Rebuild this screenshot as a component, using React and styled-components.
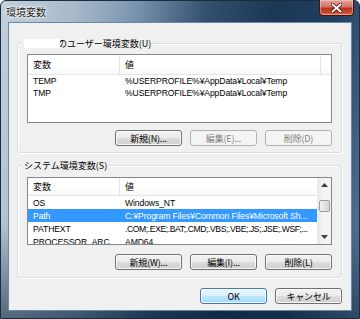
import React from "react";
import styled, { createGlobalStyle } from "styled-components";

const Global = createGlobalStyle`
  html, body { margin: 0; padding: 0; background: #ffffff; }
  body { width: 360px; height: 319px; overflow: hidden; }
`;

const UI_FONT = `"Liberation Sans", "Noto Sans CJK JP", sans-serif`;

const Window = styled.div`
  width: 360px;
  height: 319px;
  box-sizing: border-box;
  display: flex;
  flex-direction: column;
  border: 1px solid #1a2c40;
  border-radius: 6px 6px 0 0;
  background:
    linear-gradient(180deg, rgba(255,255,255,0.0) 0%, rgba(255,255,255,0) 70%, rgba(10,30,55,0.55) 100%),
    linear-gradient(100deg, #c3d0dc 0%, #a7b9ca 18%, #7d97b1 32%, #33506f 50%, #1b3756 66%, #213f60 82%, #5d7e9e 100%);
  font-family: ${UI_FONT};
  font-size: 9px;
  color: #000;
`;

const TitleBar = styled.div`
  height: 21px;
  display: flex;
  align-items: flex-start;
  justify-content: space-between;
  padding-left: 5px;
  padding-right: 5px;
`;

const Title = styled.div`
  font-family: "Noto Sans CJK JP", sans-serif;
  font-size: 10px;
  line-height: 10px;
  margin-top: 6px;
  color: #1e1e1e;
  text-shadow: 0 0 4px #fff, 0 0 3px #fff, 0 0 2px #fff;
`;

const CloseButton = styled.div`
  width: 35px;
  height: 16px;
  margin-top: -1px;
  box-sizing: border-box;
  border: 1px solid #3f1410;
  border-top: none;
  border-radius: 0 0 4px 4px;
  background: linear-gradient(180deg, #e4a49a 0%, #d0766a 45%, #b3301f 55%, #c94a31 85%, #e2704a 100%);
  box-shadow: inset 0 0 0 1px rgba(255,220,210,0.45);
  display: flex;
  align-items: center;
  justify-content: center;
`;

const Client = styled.div`
  flex: 1;
  margin: 0 7px 7px 7px;
  border: 1px solid #6a88a8;
  background: #f0f0f0;
  display: flex;
  flex-direction: column;
  padding: 20px 8px 0 8px;
`;

const Group = styled.div`
  position: relative;
  border: 1px solid #d5dfe5;
  box-shadow: inset 1px 1px 0 #ffffff, 1px 1px 0 #ffffff;
  border-radius: 3px;
  height: ${(p) => p.$h}px;
  box-sizing: border-box;
  padding: ${(p) => p.$pt}px 9px 0 9px;
  display: flex;
  flex-direction: column;
  margin-top: ${(p) => p.$mt || 0}px;
  margin-right: 1px;
`;

const Legend = styled.div`
  position: absolute;
  top: -6px;
  left: 4px;
  padding: 0 2px;
  background: #f0f0f0;
  font-family: "Noto Sans CJK JP", sans-serif;
  font-size: 9px;
  line-height: 11px;
  color: #000;
  display: flex;
  align-items: center;
`;

const Redact = styled.span`
  display: inline-block;
  width: 36px;
  height: 9px;
  background: #ffffff;
  margin-right: -2px;
  position: relative;
  z-index: 1;
`;

const List = styled.div`
  height: ${(p) => p.$h}px;
  box-sizing: border-box;
  border: 1px solid #828790;
  background: #fff;
  display: flex;
  overflow: hidden;
  flex: none;
`;

const ListMain = styled.div`
  flex: 1;
  display: flex;
  flex-direction: column;
  min-width: 0;
`;

const Header = styled.div`
  height: ${(p) => p.$hh}px;
  flex: none;
  display: flex;
  box-sizing: border-box;
  border-bottom: 1px solid #e5e5e5;
  background: linear-gradient(180deg, #ffffff 0%, #ffffff 60%, #f7f8fa 100%);
`;

const HeadCell = styled.div`
  width: ${(p) => (p.$w ? `${p.$w}px` : "auto")};
  flex: ${(p) => (p.$w ? "none" : "1")};
  box-sizing: border-box;
  padding-left: 5px;
  display: flex;
  align-items: center;
  border-right: ${(p) => (p.$last ? "none" : "1px solid #e5e5e5")};
  font-family: "Noto Sans CJK JP", sans-serif;
  font-size: 9px;
  color: #000;
`;

const Rows = styled.div`
  display: flex;
  flex-direction: column;
`;

const Row = styled.div`
  height: ${(p) => p.$rh}px;
  flex: none;
  display: flex;
  align-items: center;
  background: ${(p) => (p.$sel ? "#3399ff" : "transparent")};
  color: ${(p) => (p.$sel ? "#ffffff" : "#000000")};
  white-space: nowrap;
`;

const Cell = styled.div`
  width: ${(p) => (p.$w ? `${p.$w}px` : "auto")};
  flex: ${(p) => (p.$w ? "none" : "1")};
  box-sizing: border-box;
  padding-left: 5px;
  overflow: hidden;
  white-space: nowrap;
  font-size: 8.6px;
  letter-spacing: ${(p) => (p.$tight ? "-0.4px" : "-0.1px")};
`;

const ScrollBar = styled.div`
  width: 13px;
  flex: none;
  background: linear-gradient(90deg, #e8e8e8 0%, #f4f4f4 40%, #f4f4f4 100%);
  border-left: 1px solid #ececec;
  display: flex;
  flex-direction: column;
  align-items: center;
`;

const Arrow = styled.div`
  height: 14px;
  width: 13px;
  display: flex;
  align-items: center;
  justify-content: center;
`;

const Thumb = styled.div`
  width: 11px;
  height: 12px;
  margin-top: 8px;
  box-sizing: border-box;
  border: 1px solid #9c9c9c;
  border-radius: 2px;
  background: linear-gradient(90deg, #f2f2f2 0%, #e2e2e2 50%, #d6d6d6 100%);
`;

const Track = styled.div`
  flex: 1;
`;

const ButtonRow = styled.div`
  display: flex;
  justify-content: flex-end;
  gap: 8px;
  margin-top: ${(p) => p.$mt}px;
`;

const Button = styled.div`
  width: 67px;
  height: 16px;
  box-sizing: border-box;
  border-radius: 3px;
  display: flex;
  align-items: center;
  justify-content: center;
  font-family: "Noto Sans CJK JP", sans-serif;
  font-size: 9px;
  letter-spacing: -0.2px;
  border: 1px solid ${(p) => (p.$disabled ? "#adb2b5" : p.$default ? "#3c7fb1" : "#707070")};
  color: ${(p) => (p.$disabled ? "#838383" : "#000")};
  background: ${(p) =>
    p.$disabled
      ? "#f4f4f4"
      : p.$default
      ? "linear-gradient(180deg, #eaf6fd 0%, #d9f0fc 50%, #bee6fd 51%, #a7d9f5 100%)"
      : "linear-gradient(180deg, #f2f2f2 0%, #ebebeb 50%, #dddddd 51%, #cfcfcf 100%)"};
  box-shadow: inset 0 0 0 1px ${(p) => (p.$disabled ? "#f4f4f4" : "rgba(255,255,255,0.8)")};
`;

const Footer = styled.div`
  display: flex;
  justify-content: flex-end;
  gap: 8px;
  margin-top: 10px;
  margin-right: 1px;
`;

function CloseX() {
  return (
    <svg width="11" height="10" viewBox="0 0 11 10">
      <path d="M1.5 1.5 L9.5 8.5 M9.5 1.5 L1.5 8.5" stroke="#3a120c" strokeWidth="3.2" strokeLinecap="square" />
      <path d="M1.5 1.5 L9.5 8.5 M9.5 1.5 L1.5 8.5" stroke="#ffffff" strokeWidth="1.8" strokeLinecap="square" />
    </svg>
  );
}

function UpArrow() {
  return (
    <svg width="7" height="4" viewBox="0 0 7 4">
      <path d="M3.5 0 L7 4 L0 4 Z" fill="#404040" />
    </svg>
  );
}

function DownArrow() {
  return (
    <svg width="7" height="4" viewBox="0 0 7 4">
      <path d="M0 0 L7 0 L3.5 4 Z" fill="#404040" />
    </svg>
  );
}

const userVars = [
  ["TEMP", "%USERPROFILE%\u00a5AppData\u00a5Local\u00a5Temp"],
  ["TMP", "%USERPROFILE%\u00a5AppData\u00a5Local\u00a5Temp"],
];

const sysVars = [
  ["OS", "Windows_NT"],
  ["Path", "C:\u00a5Program Files\u00a5Common Files\u00a5Microsoft Sh..."],
  ["PATHEXT", ".COM;.EXE;.BAT;.CMD;.VBS;.VBE;.JS;.JSE;.WSF;...", true],
  ["PROCESSOR_ARC", "AMD64"],
];

export default function App() {
  return (
    <>
      <Global />
      <Window>
        <TitleBar>
          <Title>環境変数</Title>
          <CloseButton>
            <CloseX />
          </CloseButton>
        </TitleBar>
        <Client>
          <Group $h={110} $pt={10}>
            <Legend>
              <Redact />
              のユーザー環境変数(U)
            </Legend>
            <List $h={69}>
              <ListMain>
                <Header $hh={20}>
                  <HeadCell $w={92}>変数</HeadCell>
                  <HeadCell $w={201}>値</HeadCell>
                  <HeadCell $last />
                </Header>
                <Rows>
                  {userVars.map(([k, v]) => (
                    <Row key={k} $rh={12}>
                      <Cell $w={92}>{k}</Cell>
                      <Cell>{v}</Cell>
                    </Row>
                  ))}
                </Rows>
              </ListMain>
            </List>
            <ButtonRow $mt={7}>
              <Button>新規(N)...</Button>
              <Button $disabled>編集(E)...</Button>
              <Button $disabled>削除(D)</Button>
            </ButtonRow>
          </Group>
          <Group $h={113} $mt={12} $pt={11}>
            <Legend>システム環境変数(S)</Legend>
            <List $h={68}>
              <ListMain>
                <Header $hh={18}>
                  <HeadCell $w={92}>変数</HeadCell>
                  <HeadCell $last>値</HeadCell>
                </Header>
                <Rows>
                  {sysVars.map(([k, v, tight]) => (
                    <Row key={k} $rh={13} $sel={k === "Path"}>
                      <Cell $w={92}>{k}</Cell>
                      <Cell $tight={tight}>{v}</Cell>
                    </Row>
                  ))}
                </Rows>
              </ListMain>
              <ScrollBar>
                <Arrow>
                  <UpArrow />
                </Arrow>
                <Thumb />
                <Track />
                <Arrow>
                  <DownArrow />
                </Arrow>
              </ScrollBar>
            </List>
            <ButtonRow $mt={9}>
              <Button>新規(W)...</Button>
              <Button>編集(I)...</Button>
              <Button>削除(L)</Button>
            </ButtonRow>
          </Group>
          <Footer>
            <Button $default>OK</Button>
            <Button>キャンセル</Button>
          </Footer>
        </Client>
      </Window>
    </>
  );
}
